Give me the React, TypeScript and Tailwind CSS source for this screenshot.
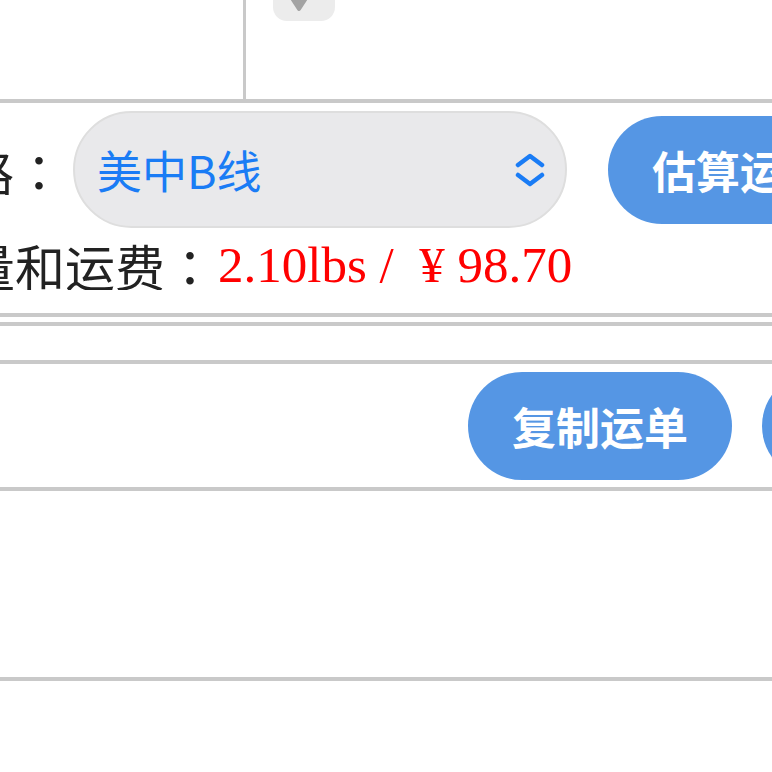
const cjk = { fontFamily: '"Noto Sans CJK SC", "Noto Sans", sans-serif' };
// centred full-width colon, like the reference
const colon = { fontFamily: '"Noto Sans CJK TC", "Noto Sans CJK SC", sans-serif' };
const serif = { fontFamily: '"Liberation Serif", "Noto Sans CJK SC", serif' };

function Divider({ className = "" }: { className?: string }) {
  return <div className={`h-[4px] shrink-0 bg-[#c9c9c9] ${className}`} />;
}

function Chevrons() {
  return (
    <svg width="30" height="34" viewBox="0 0 30 34" fill="none" className="shrink-0">
      <path d="M3 12 L15 3 L27 12" stroke="#1a7cf5" strokeWidth="4.5" strokeLinecap="round" strokeLinejoin="round" />
      <path d="M3 22 L15 31 L27 22" stroke="#1a7cf5" strokeWidth="4.5" strokeLinecap="round" strokeLinejoin="round" />
    </svg>
  );
}

function PillButton({ label }: { label: string }) {
  return (
    <button className="flex h-[108px] shrink-0 items-center whitespace-nowrap rounded-full bg-[#5596e4] px-[44px] text-[44px] font-bold text-white">
      {label}
    </button>
  );
}

export default function App() {
  return (
    <div className="flex h-[772px] w-full flex-col overflow-hidden bg-white text-[#222222]" style={cjk}>
      {/* top row cells */}
      <div className="flex h-[99px] shrink-0">
        <div className="w-[243px] shrink-0" />
        <div className="w-[3px] shrink-0 bg-[#c9c9c9]" />
        <div className="flex-1">
          <div className="ml-[27px] h-[21px] w-[62px] overflow-hidden rounded-b-[14px] bg-[#ececec]">
            <svg width="62" height="21" viewBox="0 0 62 21">
              <polygon points="15,-8 37,-8 26,9" fill="#a3a3a3" stroke="#a3a3a3" strokeWidth="4" strokeLinejoin="round" />
            </svg>
          </div>
        </div>
      </div>
      <Divider />

      {/* route + estimate */}
      <div className="flex h-[210px] shrink-0 flex-col">
        <div className="mt-[8px] flex items-center">
          <div className="flex w-[64px] shrink-0 justify-end overflow-hidden whitespace-nowrap text-[50px] leading-none">
            线路<span style={colon}>：</span>
          </div>
          <div className="ml-[9px] flex h-[117px] w-[494px] shrink-0 items-center justify-between rounded-full border-2 border-[#dedede] bg-[#e9e9eb] pl-[22px] pr-[20px]">
            <span className="text-[45px] leading-none text-[#1a7cf5]">美中B线</span>
            <Chevrons />
          </div>
          <div className="ml-[41px]">
            <PillButton label="估算运费" />
          </div>
        </div>
        <div className="mt-[2px] flex h-[70px] items-center whitespace-nowrap">
          <div className="flex w-[215px] shrink-0 justify-end overflow-hidden text-[50px] leading-none">
            重量和运费<span style={colon}>：</span>
          </div>
          <span className="ml-[3px] text-[51px] leading-none text-[#ff0000]" style={serif}>
            2.10lbs /{" "}
            <span className="inline-block w-[1em] text-center">¥</span>
            98.70
          </span>
        </div>
      </div>
      <Divider />
      <div className="h-[5px] shrink-0" />
      <Divider />
      <div className="h-[34px] shrink-0" />
      <Divider />

      {/* actions */}
      <div className="flex h-[123px] shrink-0 items-center gap-[30px] pl-[468px]">
        <PillButton label="复制运单" />
        <PillButton label="打印运单" />
      </div>
      <Divider />
      <div className="h-[186px] shrink-0" />
      <Divider />
    </div>
  );
}
